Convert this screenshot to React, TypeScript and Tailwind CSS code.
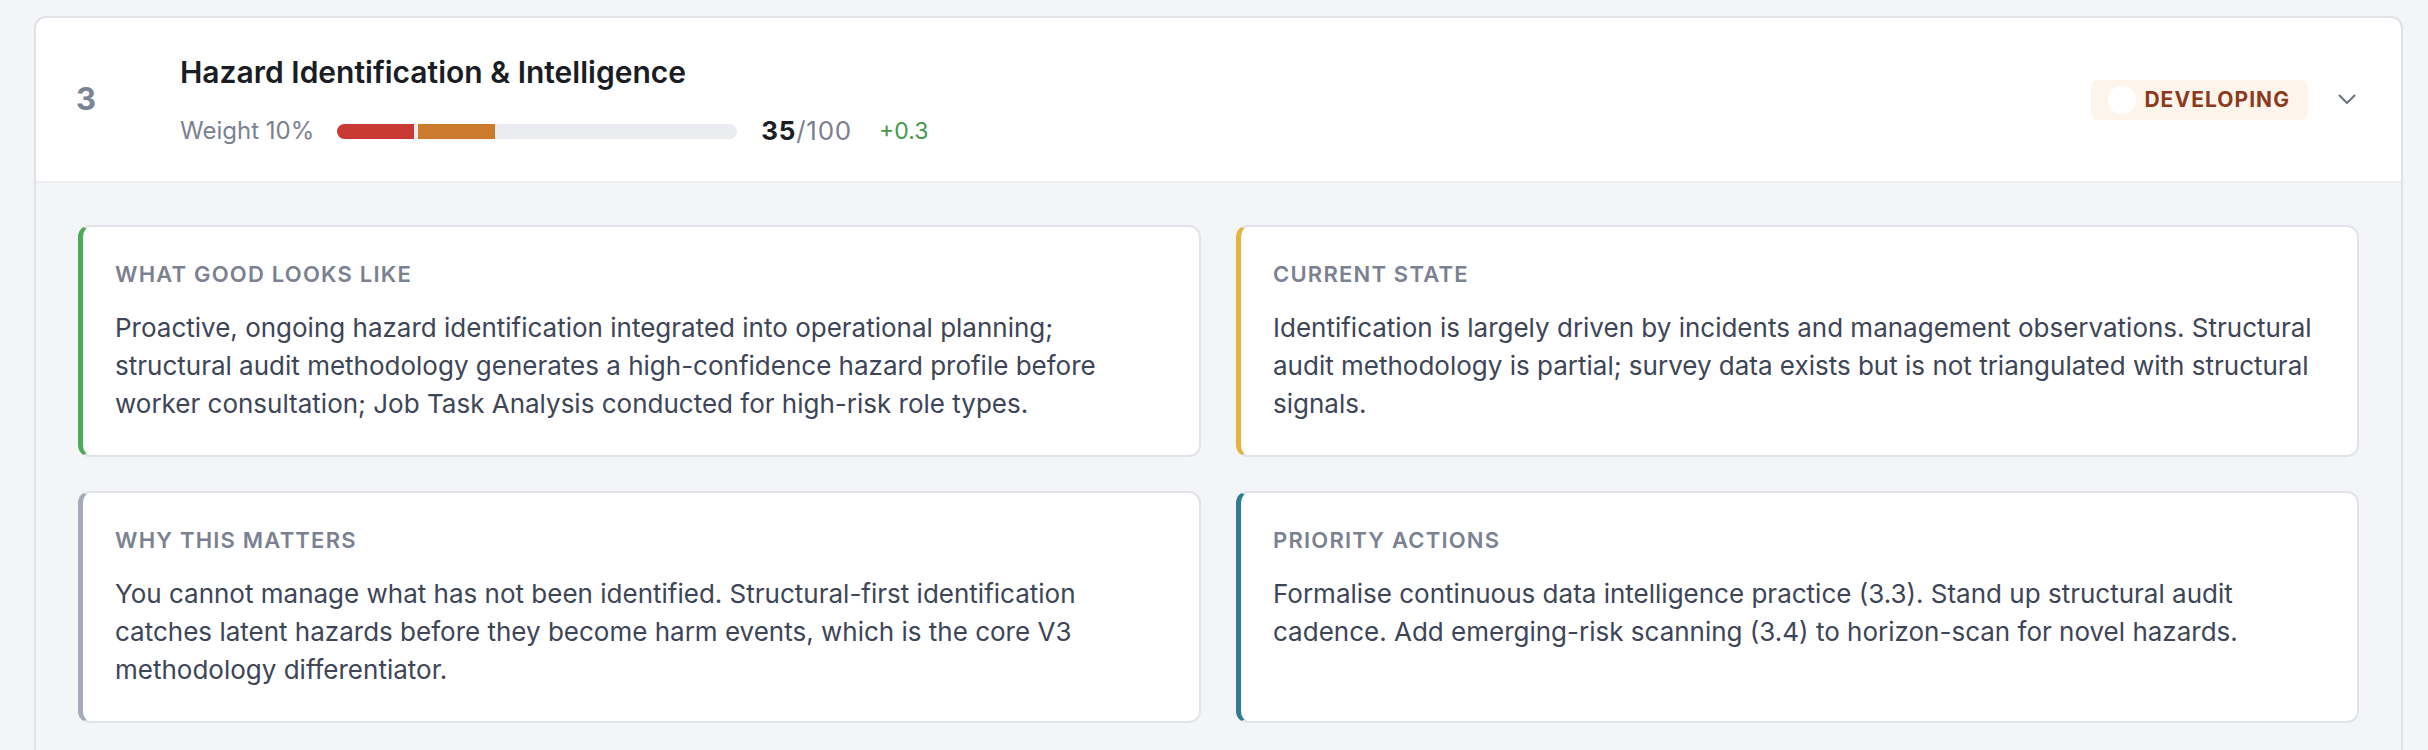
const sections = [
  {
    label: "What good looks like",
    accent: "border-l-[#4caa58]",
    body: "Proactive, ongoing hazard identification integrated into operational planning; structural audit methodology generates a high-confidence hazard profile before worker consultation; Job Task Analysis conducted for high-risk role types.",
  },
  {
    label: "Current state",
    accent: "border-l-[#e3b440]",
    body: "Identification is largely driven by incidents and management observations. Structural audit methodology is partial; survey data exists but is not triangulated with structural signals.",
  },
  {
    label: "Why this matters",
    accent: "border-l-[#a5abb8]",
    body: "You cannot manage what has not been identified. Structural-first identification catches latent hazards before they become harm events, which is the core V3 methodology differentiator.",
  },
  {
    label: "Priority actions",
    accent: "border-l-[#2e7d91]",
    body: "Formalise continuous data intelligence practice (3.3). Stand up structural audit cadence. Add emerging-risk scanning (3.4) to horizon-scan for novel hazards.",
  },
];

function ScoreBar() {
  // two filled 20-point bands, rest is track
  return (
    <div className="flex h-[15px] w-[400px] overflow-hidden rounded-full bg-[#ebecf0]">
      <div className="h-full w-[77px] bg-[#c93a34]" />
      <div className="ml-[4px] h-full w-[77px] bg-[#cc7b2e]" />
    </div>
  );
}

export default function App() {
  return (
    <div
      className="min-h-screen bg-[#f4f5f7] pl-[34px] pr-[25px] pt-[16px]"
      style={{ fontFamily: "Inter, 'Noto Sans', sans-serif" }}
    >
      <div className="overflow-hidden rounded-[12px] border-2 border-[#dfe2e7] bg-white">
        {/* Header */}
        <div className="flex h-[165px] items-center border-b-2 border-[#eceef1] pl-[40px] pr-[45px]">
          <div className="w-[104px] text-[31px] font-bold text-[#7b8494]">3</div>
          <div className="flex-1">
            <div className="text-[30px] font-semibold leading-[38px] text-[#1a1d23]">
              Hazard Identification &amp; Intelligence
            </div>
            <div className="mt-[25px] flex items-center">
              <span className="mr-[23px] text-[24px] leading-[30px] text-[#7b8190]">Weight 10%</span>
              <ScoreBar />
              <span className="ml-[24px] text-[26px] leading-[30px] tracking-[0.03em]">
                <span className="font-bold text-[#1a1d23]">35</span>
                <span className="text-[#7b8190]">/100</span>
              </span>
              <span className="ml-[27px] text-[23px] leading-[30px] text-[#3f9a4a]">+0.3</span>
            </div>
          </div>
          <div className="flex h-[40px] items-center rounded-[6px] bg-[#fdf5eb] pl-[17px] pr-[18px]">
            <span className="h-[28px] w-[28px] rounded-full bg-white" />
            <span className="ml-[8px] text-[21px] font-bold tracking-[0.05em] text-[#8c3a1e]">
              DEVELOPING
            </span>
          </div>
          <svg
            className="ml-[30px]"
            width="18"
            height="11"
            viewBox="0 0 18 11"
            fill="none"
            stroke="#6b7280"
            strokeWidth="2"
            strokeLinecap="round"
            strokeLinejoin="round"
          >
            <path d="M1.5 1.5 9 9l7.5-7.5" />
          </svg>
        </div>

        {/* Detail cards */}
        <div className="grid grid-cols-2 gap-x-[35px] gap-y-[34px] bg-[#f4f5f7] px-[42px] pb-[42px] pt-[42px]">
          {sections.map((s) => (
            <div
              key={s.label}
              className={`rounded-[12px] border-2 border-l-[5px] border-[#e1e3e8] bg-white pb-[32px] pl-[32px] pr-[40px] pt-[32px] ${s.accent}`}
            >
              <div className="text-[22px] font-semibold uppercase leading-[30px] tracking-[0.055em] text-[#7b8190]">
                {s.label}
              </div>
              <p className="mt-[20px] text-[26px] leading-[38px] text-[#3d4556]">{s.body}</p>
            </div>
          ))}
        </div>
      </div>
    </div>
  );
}
